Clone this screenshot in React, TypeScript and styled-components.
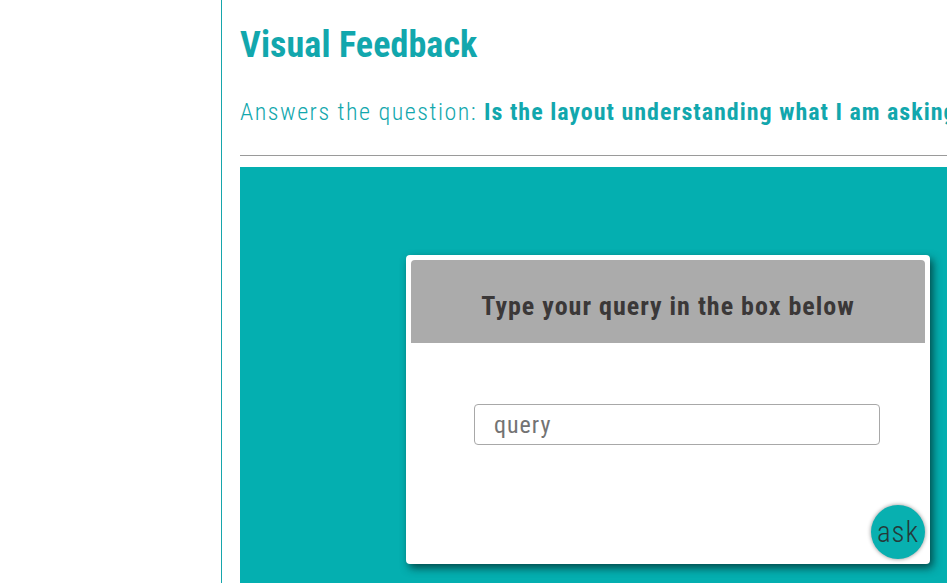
import React from 'react';
import styled, { createGlobalStyle } from 'styled-components';

const GlobalStyle = createGlobalStyle`
  html, body {
    margin: 0;
    padding: 0;
    overflow: hidden;
    background: #fff;
  }
  body {
    font-family: "Roboto Condensed", "Open Sans", sans-serif;
  }
`;

const Page = styled.div`
  display: flex;
  min-height: 583px;
`;

const Sidebar = styled.aside`
  flex: 0 0 221px;
  border-right: 1px solid #16a6ac;
`;

const Main = styled.main`
  flex: none;
  width: 856px;
  min-width: 0;
  padding-left: 18px;
`;

const Title = styled.h1`
  margin: 23px 0 0;
  font-size: 36px;
  font-weight: 700;
  line-height: 44px;
  letter-spacing: 0.1px;
  color: #12a7ad;
`;

const Subtitle = styled.p`
  margin: 30px 0 0;
  font-size: 24px;
  font-weight: 300;
  line-height: 30px;
  letter-spacing: 1.5px;
  color: #12a7ad;
  white-space: nowrap;
`;

const Strong = styled.span`
  font-weight: 700;
  letter-spacing: 1px;
`;

const Rule = styled.hr`
  margin: 28px 0 0;
  border: none;
  border-top: 1px solid #9a9a9a;
`;

const Panel = styled.section`
  margin-top: 11px;
  height: 480px;
  background: #04afb0;
  display: flex;
  justify-content: center;
  align-items: flex-start;
  padding-top: 88px;
  box-sizing: border-box;
`;

const Card = styled.div`
  width: 524px;
  height: 309px;
  box-sizing: border-box;
  padding: 5px;
  background: #fff;
  border-radius: 4px;
  box-shadow: 3px 4px 8px rgba(0, 40, 40, 0.75);
  display: flex;
  flex-direction: column;
`;

const CardHeader = styled.div`
  height: 83px;
  box-sizing: border-box;
  padding-top: 9px;
  background: #ababab;
  border-radius: 4px 4px 0 0;
  display: flex;
  align-items: center;
  justify-content: center;
  font-size: 26px;
  font-weight: 700;
  letter-spacing: 1px;
  color: #3b3838;
`;

const QueryInput = styled.input`
  margin: 61px 45px 0 63px;
  height: 41px;
  box-sizing: border-box;
  border: 1px solid #a8a8a8;
  border-radius: 4px;
  padding: 0 19px;
  font-family: inherit;
  font-size: 24px;
  letter-spacing: 1px;
  color: #444;
  outline: none;

  &::placeholder {
    color: #737373;
  }
`;

const Footer = styled.div`
  margin-top: auto;
  display: flex;
  justify-content: flex-end;
`;

const AskButton = styled.button`
  width: 54px;
  height: 54px;
  border-radius: 50%;
  border: none;
  background: #08b0b0;
  box-shadow: 0 0 4px rgba(0, 0, 0, 0.45);
  font-family: inherit;
  font-size: 29px;
  font-weight: 300;
  letter-spacing: 1px;
  color: #243a3a;
  padding: 0;
  cursor: pointer;
`;

export default function App() {
  return (
    <>
      <GlobalStyle />
      <Page>
        <Sidebar />
        <Main>
          <Title>Visual Feedback</Title>
          <Subtitle>
            Answers the question: <Strong>Is the layout understanding what I am asking for?</Strong>
          </Subtitle>
          <Rule />
          <Panel>
            <Card>
              <CardHeader>Type your query in the box below</CardHeader>
              <QueryInput placeholder="query" />
              <Footer>
                <AskButton>ask</AskButton>
              </Footer>
            </Card>
          </Panel>
        </Main>
      </Page>
    </>
  );
}
